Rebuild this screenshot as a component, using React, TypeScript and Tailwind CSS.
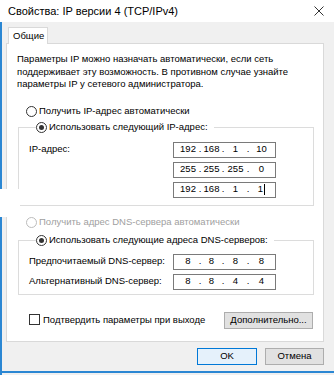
const FIELD_W = ["w-[22px]", "w-[21px]", "w-[23px]", "w-[25px]"];

const IpBox = ({ parts, caret }: { parts: string[]; caret?: boolean }) => (
  <div className="flex h-[16px] w-[103px] items-center border border-[#7a7a7a] bg-white pl-[3px]">
    {parts.map((p, i) => (
      <div key={i} className="flex items-center">
        {i > 0 && <span className="flex w-[2px] justify-center">.</span>}
        <span className={`${FIELD_W[i]} flex items-center justify-center`}>
          {p}
          {caret && i === 3 && <span className="ml-[1px] inline-block h-[11px] w-[1px] bg-black" />}
        </span>
      </div>
    ))}
  </div>
);

const Radio = ({ checked, disabled }: { checked?: boolean; disabled?: boolean }) => (
  <span
    className={`flex h-[11px] w-[11px] shrink-0 items-center justify-center rounded-full border bg-white ${
      disabled ? "border-[#bcbcbc]" : "border-[#333333]"
    }`}
  >
    {checked && <span className="h-[5px] w-[5px] rounded-full bg-[#333333]" />}
  </span>
);

const Row = ({ label, children }: { label: string; children: React.ReactNode }) => (
  <div className="flex h-[16px] items-center">
    <span className="w-[144px]">{label}</span>
    {children}
  </div>
);

export default function App() {
  return (
    <div
      className="relative flex h-[375px] w-[334px] flex-col overflow-hidden whitespace-nowrap bg-[#f0f0f0] text-[9.5px] text-black"
      style={{ fontFamily: '"Liberation Sans", Arial, sans-serif' }}
    >
      {/* title bar */}
      <div className="flex h-[22px] shrink-0 items-center justify-between bg-white pl-[8px] pr-[10px] text-[11px]">
        <span>Свойства: IP версии 4 (TCP/IPv4)</span>
        <svg width="10" height="10" viewBox="0 0 10 10" className="text-[#333]">
          <path d="M0.5 0.5 L9.5 9.5 M9.5 0.5 L0.5 9.5" stroke="currentColor" strokeWidth="1" />
        </svg>
      </div>

      <div className="flex flex-1 flex-col border-l-2 border-[#2b87d3]">
        {/* tab */}
        <div className="pt-[5px]">
          <div className="relative z-10 -mb-[1px] ml-[6px] flex h-[17px] w-[40px] items-center border border-b-0 border-[#d9d9d9] bg-white pl-[4px]">
            Общие
          </div>
        </div>

        {/* panel */}
        <div className="ml-[4px] flex h-[299px] w-[318px] flex-col border border-[#d9d9d9] bg-white px-[10px] pt-[9px]">
          <p className="leading-[12.5px]">
            Параметры IP можно назначать автоматически, если сеть
            <br />
            поддерживает эту возможность. В противном случае узнайте
            <br />
            параметры IP у сетевого администратора.
          </p>

          <div className="ml-[9px] mt-[14px] flex h-[14px] items-center gap-[2px]">
            <Radio />
            <span>Получить IP-адрес автоматически</span>
          </div>

          <fieldset className="ml-[1px] mt-[2px] w-[296px] border border-[#dcdcdc] pb-[7px] pl-[10px] pt-[7px]">
            <legend className="ml-[7px] flex h-[14px] items-center gap-[2px] pr-[6px]">
              <Radio checked />
              <span>Использовать следующий IP-адрес:</span>
            </legend>
            <div className="flex flex-col gap-[4px]">
              <Row label="IP-адрес:">
                <IpBox parts={["192", "168", "1", "10"]} />
              </Row>
              <Row label="">
                <IpBox parts={["255", "255", "255", "0"]} />
              </Row>
              <Row label="">
                <IpBox parts={["192", "168", "1", "1"]} caret />
              </Row>
            </div>
          </fieldset>

          <div className="ml-[9px] mt-[10px] flex h-[14px] items-center gap-[2px] text-[#a0a0a0]">
            <Radio disabled />
            <span>Получить адрес DNS-сервера автоматически</span>
          </div>

          <fieldset className="ml-[1px] mt-[4px] w-[296px] border border-[#dcdcdc] pb-[4px] pl-[10px] pt-[6px]">
            <legend className="ml-[7px] flex h-[14px] items-center gap-[2px] pr-[6px]">
              <Radio checked />
              <span>Использовать следующие адреса DNS-серверов:</span>
            </legend>
            <div className="flex flex-col gap-[4px]">
              <Row label="Предпочитаемый DNS-сервер:">
                <IpBox parts={["8", "8", "8", "8"]} />
              </Row>
              <Row label="Альтернативный DNS-сервер:">
                <IpBox parts={["8", "8", "4", "4"]} />
              </Row>
            </div>
          </fieldset>

          <div className="mt-[17px] flex items-start justify-between">
            <div className="ml-[12px] mt-[1px] flex items-center gap-[3px]">
              <span className="h-[11px] w-[11px] border border-[#333333] bg-white" />
              <span>Подтвердить параметры при выходе</span>
            </div>
            <button className="flex h-[17px] w-[89px] items-center justify-center border border-[#adadad] bg-[#e1e1e1]">
              Дополнительно...
            </button>
          </div>
        </div>

        {/* dialog buttons */}
        <div className="mt-[6px] flex justify-end gap-[8px] pr-[10px]">
          <button className="flex h-[17px] w-[60px] items-center justify-center border border-[#0078d7] bg-[#e5f1fb]">
            OK
          </button>
          <button className="flex h-[17px] w-[59px] items-center justify-center border border-[#adadad] bg-[#e1e1e1]">
            Отмена
          </button>
        </div>

        <div className="mt-auto mb-[2px] h-[2px] bg-[#2b87d3]" />
      </div>

      {/* white patch covering the left edge */}
      <div className="absolute left-0 top-[189px] h-[28px] w-[20px] bg-white" />
    </div>
  );
}
